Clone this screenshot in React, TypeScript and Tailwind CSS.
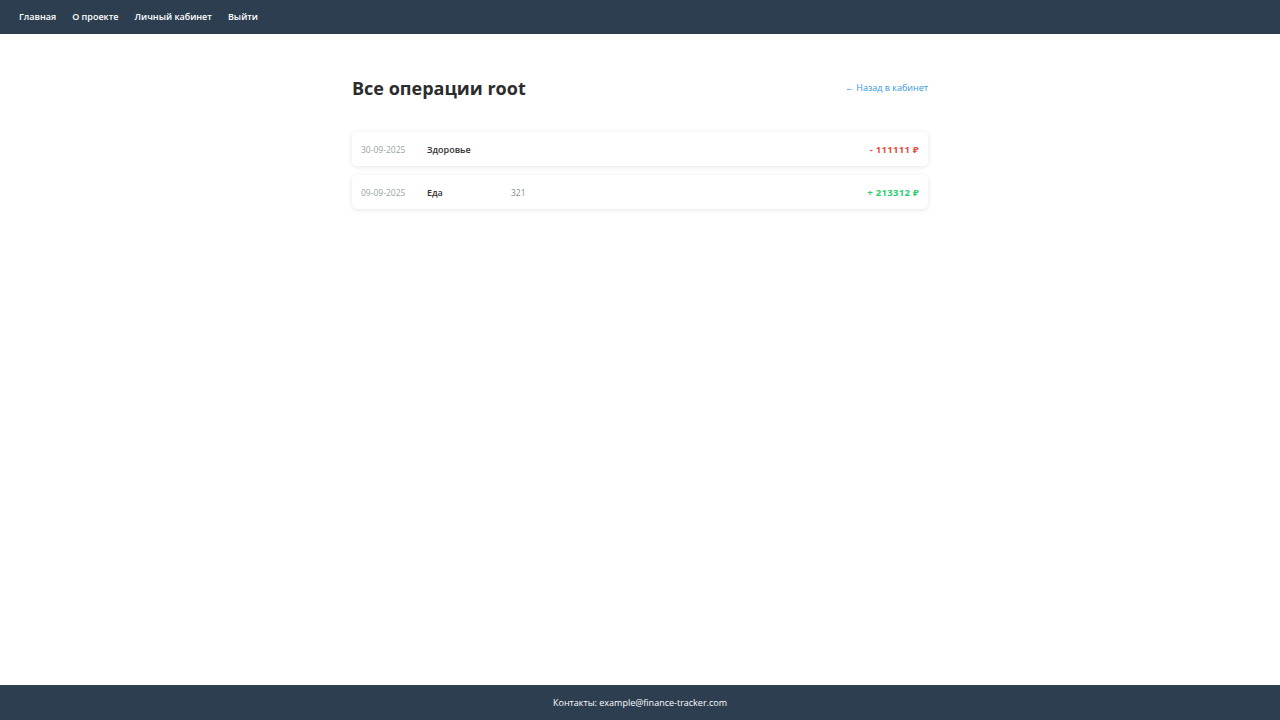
interface Operation {
  date: string;
  category: string;
  description: string;
  amount: number;
  type: "income" | "expense";
}

const operations: Operation[] = [
  { date: "30-09-2025", category: "Здоровье", description: "", amount: 111111, type: "expense" },
  { date: "09-09-2025", category: "Еда", description: "321", amount: 213312, type: "income" },
];

function OperationRow({ op }: { op: Operation }) {
  return (
    <div className="flex items-center h-[34px] px-[9px] pt-[2px] bg-white rounded-[5px] shadow-[0_1px_5px_rgba(0,0,0,0.1)]">
      <div className="w-[66px] text-[8.5px] text-[#95a5a6]">{op.date}</div>
      <div className="w-[84px] text-[9px] font-semibold text-[#333]">{op.category}</div>
      <div className="flex-1 text-[8.5px] text-[#7f8c8d]">{op.description}</div>
      <div
        className={
          op.type === "income"
            ? "text-[9.5px] font-bold tracking-[0.3px] text-[#2ecc71]"
            : "text-[9.5px] font-bold tracking-[0.3px] text-[#e74c3c]"
        }
      >
        {op.type === "income" ? "+" : "-"} {op.amount} ₽
      </div>
    </div>
  );
}

export default function App() {
  return (
    <div
      className="flex flex-col min-h-[720px] bg-white"
      style={{ fontFamily: '"Open Sans", "Noto Sans", sans-serif' }}
    >
      <header className="h-[34px] bg-[#2c3e50] flex items-center px-[19px] gap-[16px]">
        <a className="text-white text-[9px] font-semibold">Главная</a>
        <a className="text-white text-[9px] font-semibold">О проекте</a>
        <a className="text-white text-[9px] font-semibold">Личный кабинет</a>
        <a className="text-white text-[9px] font-semibold">Выйти</a>
      </header>

      <main className="flex-1">
        <div className="w-[576px] mx-auto pt-[40px]">
          <div className="flex items-center justify-between">
            <h1 className="text-[18px] font-bold text-[#2c2c2c] leading-[28px]">Все операции root</h1>
            <a className="text-[9px] text-[#3498db]">← Назад в кабинет</a>
          </div>
          <div className="flex flex-col gap-[9px] mt-[30px]">
            {operations.map((op) => (
              <OperationRow key={op.date} op={op} />
            ))}
          </div>
        </div>
      </main>

      <footer className="h-[35px] bg-[#2c3e50] flex items-center justify-center">
        <span className="text-white text-[9px]">Контакты: example@finance-tracker.com</span>
      </footer>
    </div>
  );
}
